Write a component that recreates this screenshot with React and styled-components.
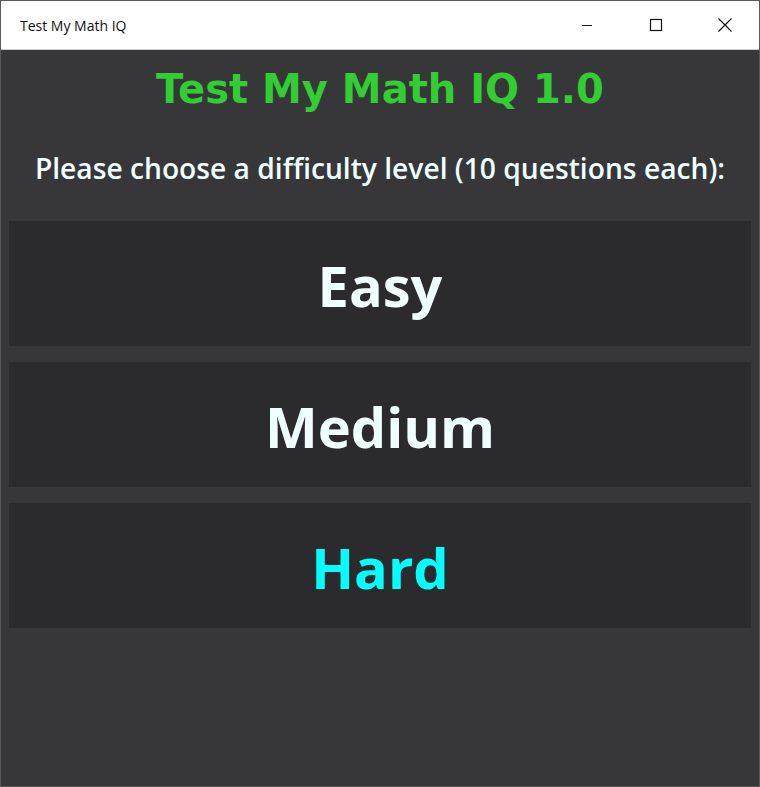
import styled, { createGlobalStyle } from "styled-components";

const GlobalStyle = createGlobalStyle`
  html, body {
    margin: 0;
    padding: 0;
    background: #ffffff;
  }
`;

const levels = [
  { label: "Easy", color: "#f0ffff" },
  { label: "Medium", color: "#f0ffff" },
  { label: "Hard", color: "#00ffff" },
];

const Window = styled.div`
  width: 760px;
  height: 787px;
  box-sizing: border-box;
  border: 1px solid #5a5a5a;
  display: flex;
  flex-direction: column;
  background: #373739;
`;

const TitleBar = styled.div`
  height: 48px;
  flex-shrink: 0;
  display: flex;
  align-items: center;
  background: #ffffff;
  border-bottom: 1px solid #d0d0d0;
`;

const WindowTitle = styled.span`
  flex: 1;
  padding-left: 19px;
  font-family: "Open Sans", "Liberation Sans", sans-serif;
  font-size: 14px;
  color: #111;
`;

const Controls = styled.div`
  display: flex;
  height: 100%;
`;

const ControlButton = styled.div`
  width: 69px;
  height: 100%;
  display: flex;
  align-items: center;
  justify-content: center;
`;

const Body = styled.div`
  flex: 1;
  display: flex;
  flex-direction: column;
  padding: 0 8px;
`;

const Heading = styled.h1`
  margin: 13px 0 0;
  text-align: center;
  font-family: "DejaVu Sans", Verdana, sans-serif;
  font-weight: bold;
  font-size: 40px;
  line-height: 52px;
  color: #32cd32;
`;

const Prompt = styled.p`
  margin: 33px 0 0;
  text-align: center;
  font-family: "Open Sans", "Liberation Sans", sans-serif;
  font-weight: 600;
  font-size: 28.2px;
  line-height: 40px;
  color: #f0ffff;
`;

const LevelList = styled.div`
  margin-top: 33px;
  display: flex;
  flex-direction: column;
  gap: 16px;
`;

const LevelButton = styled.button`
  height: 125px;
  border: none;
  background: #2b2b2d;
  display: flex;
  align-items: center;
  justify-content: center;
  font-family: "Open Sans", "Liberation Sans", sans-serif;
  font-weight: 700;
  font-size: 56px;
  color: ${(p) => p.$color};
  cursor: pointer;
  padding: 2px 0 0;
`;

const App = () => {
  return (
    <>
      <GlobalStyle />
      <Window>
        <TitleBar>
          <WindowTitle>Test My Math IQ</WindowTitle>
          <Controls>
            <ControlButton>
              <svg width="12" height="12" viewBox="0 0 12 12">
                <path d="M1 6.5h10" stroke="#111" strokeWidth="1" />
              </svg>
            </ControlButton>
            <ControlButton>
              <svg width="14" height="14" viewBox="0 0 14 14">
                <rect x="1.5" y="1.5" width="11" height="11" fill="none" stroke="#111" strokeWidth="1.2" />
              </svg>
            </ControlButton>
            <ControlButton>
              <svg width="16" height="16" viewBox="0 0 16 16">
                <path d="M1.5 1.5l13 13M14.5 1.5l-13 13" stroke="#111" strokeWidth="1.2" />
              </svg>
            </ControlButton>
          </Controls>
        </TitleBar>
        <Body>
          <Heading>Test My Math IQ 1.0</Heading>
          <Prompt>Please choose a difficulty level (10 questions each):</Prompt>
          <LevelList>
            {levels.map((level) => (
              <LevelButton key={level.label} $color={level.color}>
                {level.label}
              </LevelButton>
            ))}
          </LevelList>
        </Body>
      </Window>
    </>
  );
};

export default App;
